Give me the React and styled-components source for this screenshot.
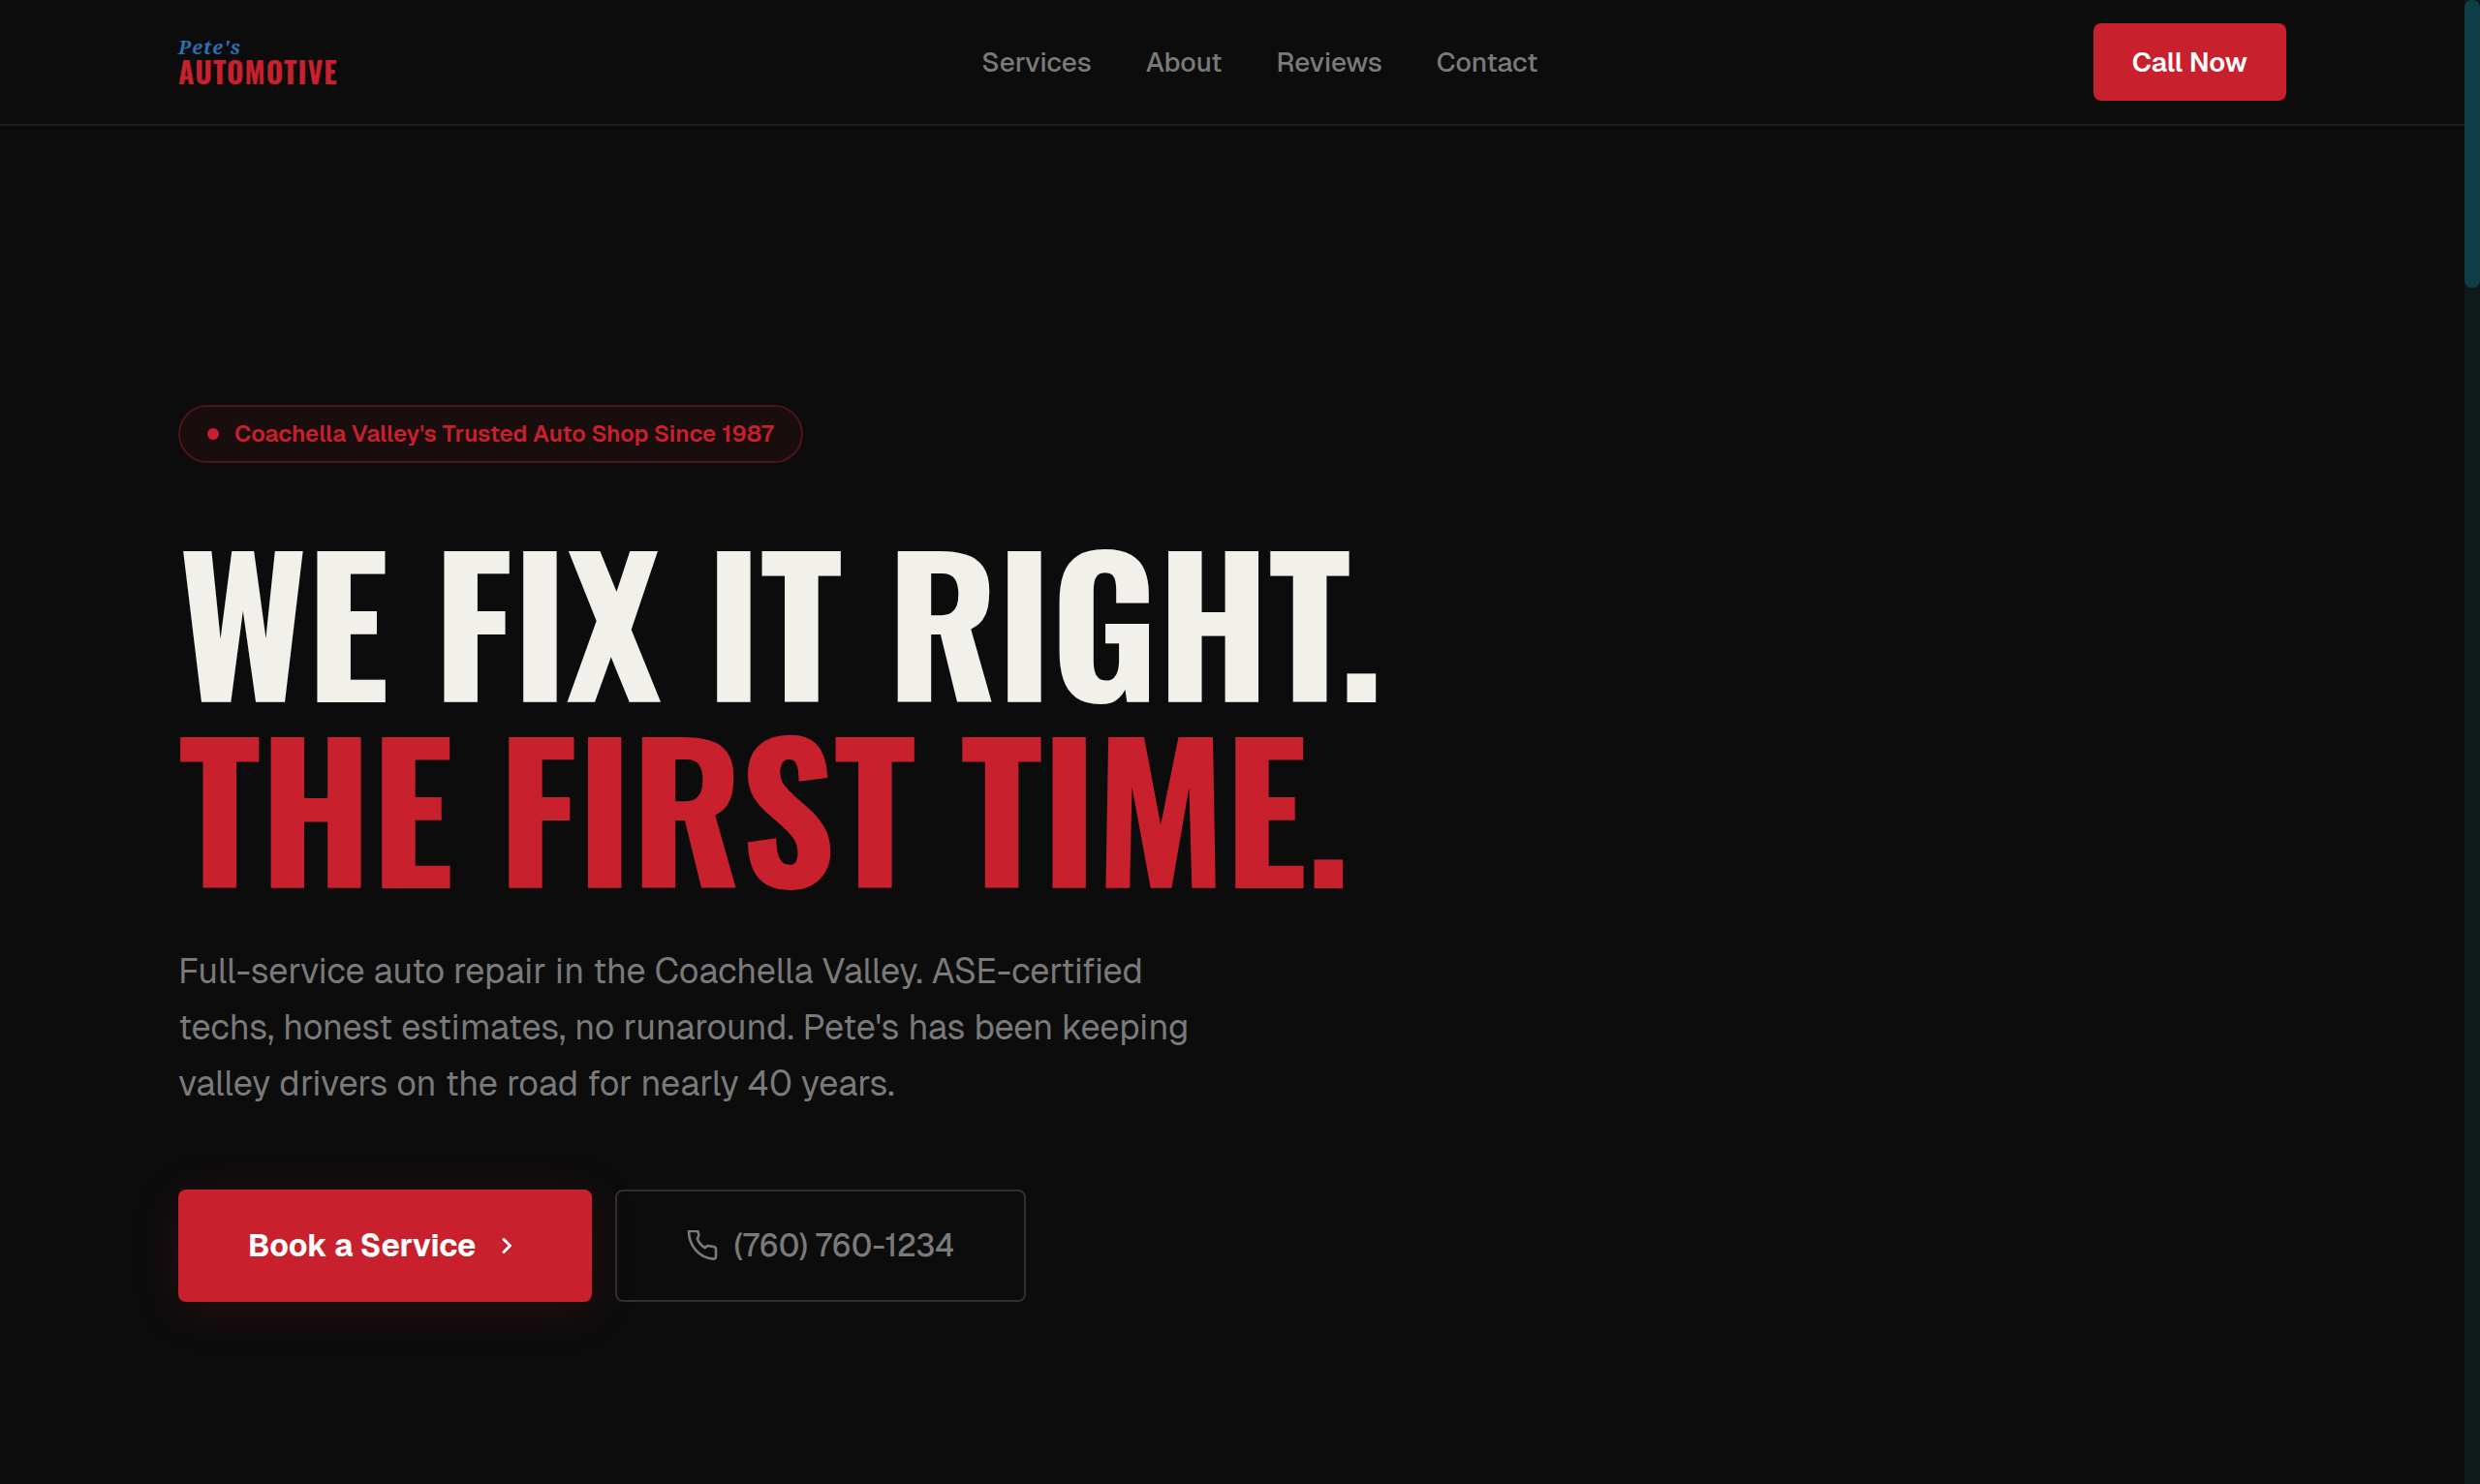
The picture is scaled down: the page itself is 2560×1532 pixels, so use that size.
import React from "react";
import styled, { createGlobalStyle } from "styled-components";

const GlobalStyle = createGlobalStyle`
  * {
    box-sizing: border-box;
  }
  body {
    margin: 0;
    background: #0c0c0c;
    color: #f2f0eb;
    font-family: Geist, Inter, sans-serif;
  }
  a {
    text-decoration: none;
  }
`;

const Shell = styled.div`
  display: grid;
  grid-template-columns: 1fr 16px;
  min-height: 100vh;
`;

const Page = styled.div`
  min-width: 0;
`;

const ScrollTrack = styled.div`
  background: #111a1a;
`;

const ScrollThumb = styled.div`
  height: 297px;
  border-radius: 8px;
  background: #0e3f48;
`;

const Wrap = styled.div`
  width: 100%;
  max-width: 2304px;
  margin: 0 auto;
  padding: 0 64px;
`;

const Header = styled.header`
  border-bottom: 2px solid #1e1e1e;
`;

const HeaderRow = styled(Wrap)`
  display: flex;
  align-items: center;
  justify-content: space-between;
  height: 128px;
`;

const Logo = styled.a`
  display: flex;
  flex-direction: column;
  width: 256px;
`;

const LogoName = styled.span`
  font: italic 700 20px/20px "Noto Serif", "Liberation Serif", serif;
  letter-spacing: 1px;
  color: #2f6db5;
`;

const LogoTrade = styled.span`
  font: 700 30px/30px Oswald, "Roboto Condensed", sans-serif;
  letter-spacing: 1px;
  color: #c8202c;
`;

const Nav = styled.nav`
  display: flex;
  gap: 56px;
`;

const NavLink = styled.a`
  font-size: 28px;
  font-weight: 500;
  line-height: 40px;
  color: #7a7a7a;
`;

const CallButton = styled.button`
  height: 80px;
  padding: 0 40px;
  border: none;
  border-radius: 8px;
  background: #c8202c;
  color: #ffffff;
  font: 600 28px/40px Geist, Inter, sans-serif;
`;

const Hero = styled.main`
  padding: 288px 0 184px;
`;

const Badge = styled.div`
  display: inline-flex;
  align-items: center;
  gap: 16px;
  height: 60px;
  padding: 0 28px;
  border: 2px solid #4d141a;
  border-radius: 30px;
  background: #190d0e;
  color: #c8202c;
  font-size: 24px;
  font-weight: 600;
  line-height: 32px;
`;

const Dot = styled.span`
  width: 12px;
  height: 12px;
  border-radius: 50%;
  background: #c8202c;
`;

const Headline = styled.h1`
  margin: 64px 0 48px;
  font: 700 192px/192px Oswald, "Roboto Condensed", sans-serif;
  letter-spacing: -0.01em;
  text-transform: uppercase;
`;

const HeadlineRow = styled.span`
  display: block;
  color: ${(p) => (p.$accent ? "#c8202c" : "#f2f0eb")};
`;

const Lead = styled.p`
  max-width: 1088px;
  margin: 0 0 80px;
  font-size: 36px;
  line-height: 58px;
  color: #7a7a7a;
`;

const Actions = styled.div`
  display: flex;
  gap: 24px;
`;

const Action = styled.a`
  display: flex;
  align-items: center;
  gap: 16px;
  height: 116px;
  padding: 0 72px;
  border-radius: 8px;
  font-size: 32px;
  line-height: 48px;
`;

const BookLink = styled(Action)`
  background: #c8202c;
  box-shadow: 0 8px 48px rgba(200, 32, 44, 0.15);
  color: #ffffff;
  font-weight: 700;
`;

const PhoneLink = styled(Action)`
  border: 2px solid #303030;
  color: #7a7a7a;
  font-weight: 500;
`;

const Icon = styled.svg`
  flex: none;
  width: 32px;
  height: 32px;
  fill: none;
  stroke: currentColor;
  stroke-linejoin: round;
`;

const links = ["Services", "About", "Reviews", "Contact"];

function App() {
  return (
    <Shell>
      <GlobalStyle />
      <Page>
        <Header>
          <HeaderRow>
            <Logo href="#home">
              <LogoName>Pete's</LogoName>
              <LogoTrade>AUTOMOTIVE</LogoTrade>
            </Logo>
            <Nav>
              {links.map((name) => (
                <NavLink key={name} href={"#" + name.toLowerCase()}>
                  {name}
                </NavLink>
              ))}
            </Nav>
            <CallButton type="button">Call Now</CallButton>
          </HeaderRow>
        </Header>
        <Hero>
          <Wrap>
            <Badge>
              <Dot />
              Coachella Valley's Trusted Auto Shop Since 1987
            </Badge>
            <Headline>
              <HeadlineRow>We fix it right.</HeadlineRow>
              <HeadlineRow $accent>The first time.</HeadlineRow>
            </Headline>
            <Lead>
              Full-service auto repair in the Coachella Valley. ASE-certified
              techs, honest estimates, no runaround. Pete's has been keeping
              valley drivers on the road for nearly 40 years.
            </Lead>
            <Actions>
              <BookLink href="#book">
                Book a Service
                <Icon viewBox="0 0 32 32" strokeWidth="3" strokeLinecap="round">
                  <path d="M13 9.5 19.5 16 13 22.5" />
                </Icon>
              </BookLink>
              <PhoneLink href="tel:7607601234">
                <Icon viewBox="0 0 32 32" strokeWidth="2.6">
                  <path d="M2 1H11.4L12.4 5.2 10.8 8.8C12.2 12.6 15 16 18.6 18.2L21.4 16 27.6 17C29.2 17.3 30 18.2 30 19.6V27C30 28.8 29 29.8 27.2 29.6C13 28.6 2 16 2 1Z" />
                </Icon>
                (760) 760-1234
              </PhoneLink>
            </Actions>
          </Wrap>
        </Hero>
      </Page>
      <ScrollTrack>
        <ScrollThumb />
      </ScrollTrack>
    </Shell>
  );
}

export default App;
